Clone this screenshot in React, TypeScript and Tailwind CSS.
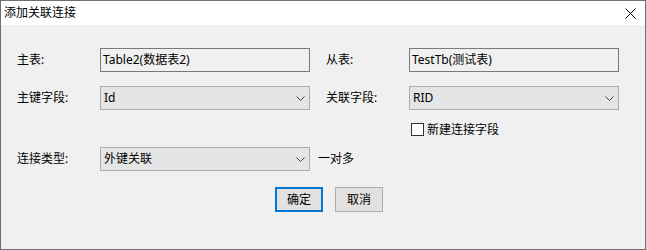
import React from "react";

const font = { fontFamily: '"Noto Sans", "Noto Sans CJK SC", sans-serif' };

function Chevron() {
  return (
    <svg width="9" height="5" viewBox="0 0 9 5" className="mr-[4px] shrink-0">
      <path d="M0.5 0.5 L4.5 4.5 L8.5 0.5" fill="none" stroke="#404040" strokeWidth="1" />
    </svg>
  );
}

function TextBox({ value }: { value: string }) {
  return (
    <div className="w-[210px] h-[24px] border border-[#7a7a7a] bg-[#f0f0f0] flex items-center pl-[2px] text-[12px] leading-[16px] text-black whitespace-nowrap">
      {value}
    </div>
  );
}

function Combo({ value }: { value: string }) {
  return (
    <div className="w-[210px] h-[24px] border border-[#adadad] bg-[#e5e5e5] flex items-center justify-between pl-[3px] text-[12px] leading-[16px] text-black whitespace-nowrap">
      <span>{value}</span>
      <Chevron />
    </div>
  );
}

function Label({ text }: { text: string }) {
  return <div className="w-[83px] shrink-0 text-[12px] leading-[16px] text-black whitespace-nowrap">{text}</div>;
}

export default function App() {
  return (
    <div style={font} className="w-[646px] h-[250px] bg-[#f0f0f0] border border-[#6f6f6f] flex flex-col">
      <div className="h-[24px] bg-white flex items-center justify-between pl-[3px] pr-[9px]">
        <span className="text-[12px] leading-[16px] text-black">添加关联连接</span>
        <svg width="11" height="11" viewBox="0 0 11 11">
          <path d="M0.5 0.5 L10.5 10.5 M10.5 0.5 L0.5 10.5" stroke="#000" strokeWidth="1" fill="none" />
        </svg>
      </div>
      <div className="flex flex-col pl-[16px] pt-[23px]">
        <div className="flex items-center h-[24px]">
          <Label text="主表:" />
          <TextBox value="Table2(数据表2)" />
          <div className="w-[16px]" />
          <Label text="从表:" />
          <TextBox value="TestTb(测试表)" />
        </div>
        <div className="flex items-center h-[24px] mt-[14px]">
          <Label text="主键字段:" />
          <Combo value="Id" />
          <div className="w-[16px]" />
          <Label text="关联字段:" />
          <Combo value="RID" />
        </div>
        <div className="flex items-center h-[13px] mt-[13px] ml-[394px]">
          <div className="w-[13px] h-[13px] border border-[#333333] bg-white shrink-0" />
          <span className="ml-[3px] text-[12px] leading-[16px] text-black whitespace-nowrap">新建连接字段</span>
        </div>
        <div className="flex items-center h-[24px] mt-[11px]">
          <Label text="连接类型:" />
          <Combo value="外键关联" />
          <span className="ml-[8px] text-[12px] leading-[16px] text-black whitespace-nowrap">一对多</span>
        </div>
        <div className="flex items-center mt-[16px] ml-[258px] gap-[12px]">
          <div className="w-[48px] h-[25px] border-2 border-[#0078d7] bg-[#e1e1e1] flex items-center justify-center text-[12px] leading-[16px] text-black">
            确定
          </div>
          <div className="w-[48px] h-[25px] border border-[#adadad] bg-[#e1e1e1] flex items-center justify-center text-[12px] leading-[16px] text-black">
            取消
          </div>
        </div>
      </div>
    </div>
  );
}
